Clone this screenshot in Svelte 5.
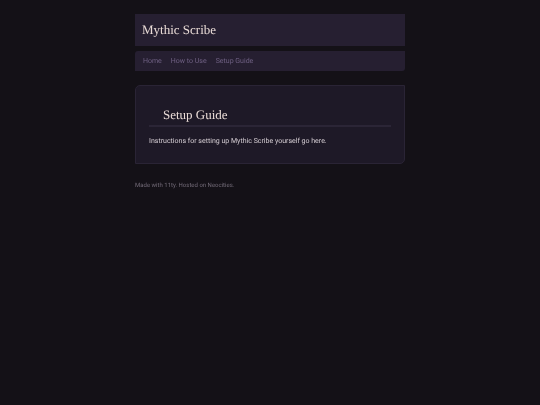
<script>
	const siteName = 'Mythic Scribe';

	const links = [
		{ title: 'Home', path: '#home' },
		{ title: 'How to Use', path: '#how-to-use' },
		{ title: 'Setup Guide', path: '#setup-guide' }
	];
</script>

<div class="page">
	<header class="site-header">
		<h1>{siteName}</h1>
	</header>

	<nav class="site-nav" aria-label="Main">
		<ul>
			{#each links as link}
				<li><a href={link.path}>{link.title}</a></li>
			{/each}
		</ul>
	</nav>

	<main class="content">
		<h2>Setup Guide</h2>
		<p>Instructions for setting up {siteName} yourself go here.</p>
	</main>

	<footer class="site-footer">Made with 11ty. Hosted on Neocities.</footer>
</div>

<style>
	:global(body) {
		background: #141117;
		color: #d5cdd3;
		font-family: Roboto, 'Liberation Sans', sans-serif;
		font-size: 7px;
		line-height: 10px;
		text-rendering: geometricPrecision;
	}

	.page {
		width: 50%;
		margin: 0 auto;
		padding: 14px 0;
		will-change: transform;
	}

	h1,
	h2 {
		margin: 0;
		color: #eadcd7;
		font-family: 'Liberation Serif', serif;
		font-size: 13px;
		font-weight: 400;
		line-height: 16px;
	}

	.site-header {
		padding: 8px 7px;
		background: #261f31;
	}

	.site-nav {
		margin-top: 5px;
		padding: 5px 8px;
		background: #261f31;
		border-radius: 3px 0;
	}

	.site-nav ul {
		display: flex;
		gap: 9px;
		margin: 0;
		padding: 0;
		list-style: none;
	}

	.site-nav a {
		color: #6f6083;
		text-decoration: none;
	}

	.site-nav a:hover {
		color: #eadcd7;
	}

	.content {
		margin-top: 14px;
		padding: 21px 13px 17px;
		background: #1e1927;
		border: 1px solid #2a2435;
		border-radius: 5px 0;
	}

	.content h2 {
		padding: 0 14px 2px;
		border-bottom: 2px solid #2b2536;
	}

	.content p {
		margin: 9px 0 0;
	}

	.site-footer {
		margin-top: 17px;
		color: #736b78;
		font-size: 6px;
	}
</style>
